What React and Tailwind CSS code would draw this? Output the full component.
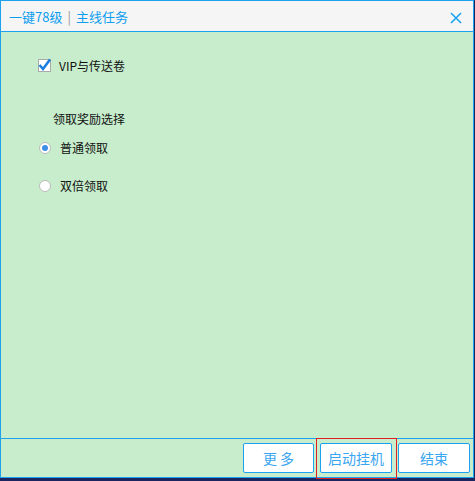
export default function App() {
  const font = { fontFamily: '"Noto Sans CJK SC", "Noto Sans", sans-serif' };
  return (
    <div className="relative w-[475px] h-[481px] bg-[#1b2560] overflow-hidden" style={font}>
      <div className="flex flex-col w-[474px] h-[478px] border border-[#1ba3ef] bg-[#c7edcc]">
        <div className="flex items-center justify-between h-[31px] bg-[#f5f5f5] border-b border-[#1ba3ef] pl-[8px] pr-[11px] shrink-0">
          <div className="flex items-center text-[13px] text-[#0e9ef0] leading-none">
            <span>一键78级</span>
            <span className="mx-[5px] text-[#999]">|</span>
            <span>主线任务</span>
          </div>
          <svg width="12" height="12" viewBox="0 0 12 12" className="mt-[3px]">
            <path d="M1 1 L11 11 M11 1 L1 11" stroke="#1ba3ef" strokeWidth="1.6" />
          </svg>
        </div>
        <div className="flex-1 relative text-[12px] text-[#111] leading-none">
          <div className="flex items-center pl-[37px] pt-[27px]">
            <span className="w-[13px] h-[13px] bg-white border border-[#aaa] flex items-center justify-center">
              <svg width="13" height="13" viewBox="0 0 13 13" className="overflow-visible">
                <path d="M1.5 6 L5 10 L12 0.5" stroke="#1a7fe0" strokeWidth="2.6" fill="none" />
              </svg>
            </span>
            <span className="ml-[8px]">VIP与传送卷</span>
          </div>
          <div className="pl-[52px] mt-[41px]">领取奖励选择</div>
          <div className="flex items-center pl-[38px] mt-[17px]">
            <span className="w-[12px] h-[12px] rounded-full bg-white border border-[#bbb] flex items-center justify-center">
              <span className="w-[6px] h-[6px] rounded-full bg-[#3d8fe6]" />
            </span>
            <span className="ml-[9px]">普通领取</span>
          </div>
          <div className="flex items-center pl-[38px] mt-[26px]">
            <span className="w-[12px] h-[12px] rounded-full bg-white border border-[#bbb]" />
            <span className="ml-[9px]">双倍领取</span>
          </div>
        </div>
        <div className="h-[39px] border-t border-[#1ba3ef] flex items-start justify-end gap-[6px] pr-[3px] pt-[4px] shrink-0">
          <button className="w-[71px] h-[30px] bg-white border border-[#1ba3ef] rounded-[2px] text-[14px] text-[#3aa5f0] leading-none">更 多</button>
          <button className="w-[72px] h-[30px] bg-white border border-[#1ba3ef] rounded-[2px] text-[14px] text-[#3aa5f0] leading-none">启动挂机</button>
          <button className="w-[72px] h-[30px] bg-white border border-[#1ba3ef] rounded-[2px] text-[14px] text-[#3aa5f0] leading-none">结束</button>
        </div>
      </div>
      <div className="absolute left-[316px] top-[438px] w-[81px] h-[41px] border border-[#e02020]" />
    </div>
  );
}
